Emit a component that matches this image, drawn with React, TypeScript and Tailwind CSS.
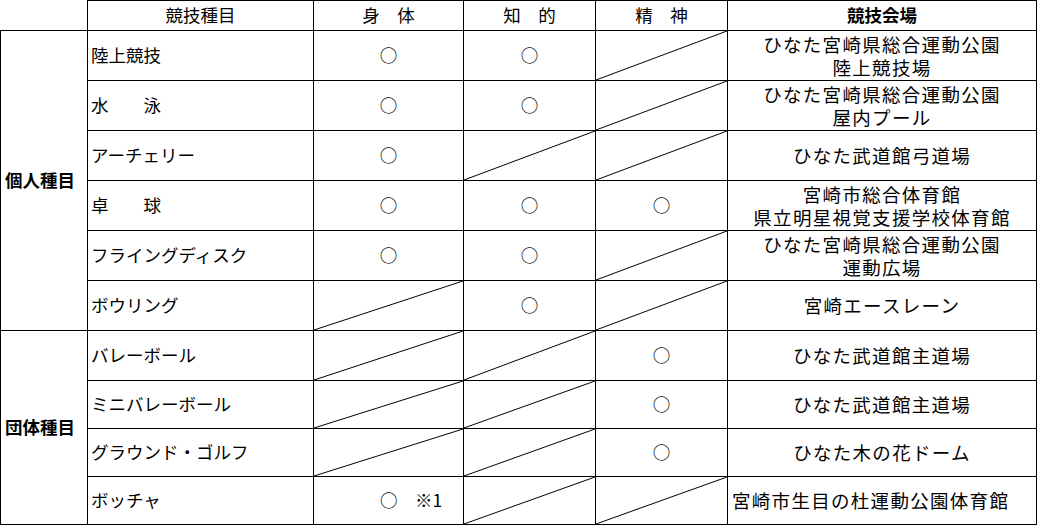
type Mark = 'o' | '/' | '' | 'note';

type Row = {
  name: string;
  body: Mark;
  mind: Mark;
  spirit: Mark;
  venue: string[];
  left?: boolean;
};

const individual: Row[] = [
  { name: '陸上競技', body: 'o', mind: 'o', spirit: '/', venue: ['ひなた宮崎県総合運動公園', '陸上競技場'] },
  { name: '水　　泳', body: 'o', mind: 'o', spirit: '/', venue: ['ひなた宮崎県総合運動公園', '屋内プール'] },
  { name: 'アーチェリー', body: 'o', mind: '/', spirit: '/', venue: ['ひなた武道館弓道場'] },
  { name: '卓　　球', body: 'o', mind: 'o', spirit: 'o', venue: ['宮崎市総合体育館', '県立明星視覚支援学校体育館'] },
  { name: 'フライングディスク', body: 'o', mind: 'o', spirit: '/', venue: ['ひなた宮崎県総合運動公園', '運動広場'] },
  { name: 'ボウリング', body: '/', mind: 'o', spirit: '/', venue: ['宮崎エースレーン'] },
];

const team: Row[] = [
  { name: 'バレーボール', body: '/', mind: '/', spirit: 'o', venue: ['ひなた武道館主道場'] },
  { name: 'ミニバレーボール', body: '/', mind: '/', spirit: 'o', venue: ['ひなた武道館主道場'] },
  { name: 'グラウンド・ゴルフ', body: '/', mind: '/', spirit: 'o', venue: ['ひなた木の花ドーム'] },
  { name: 'ボッチャ', body: 'note', mind: '/', spirit: '/', venue: ['宮崎市生目の杜運動公園体育館'], left: true },
];

const Slash = () => (
  <svg className="absolute inset-0 w-full h-full" viewBox="0 0 100 100" preserveAspectRatio="none">
    <line x1="0" y1="100" x2="100" y2="0" stroke="#000" strokeWidth="1" vectorEffect="non-scaling-stroke" />
  </svg>
);

const MarkCell = ({ mark }: { mark: Mark }) => {
  if (mark === '/') {
    return (
      <td className="relative border border-black p-0">
        <Slash />
      </td>
    );
  }
  if (mark === 'note') {
    return <td className="border border-black p-0 pl-[66px] text-left whitespace-pre">○　※1</td>;
  }
  return <td className="border border-black p-0 text-center">{mark === 'o' ? '○' : ''}</td>;
};

const Line = ({ row, group, span, tall }: { row: Row; group?: string; span?: number; tall?: boolean }) => (
  <tr className={tall ? 'h-[50px]' : 'h-[48px]'}>
    {group && (
      <td rowSpan={span} className="border border-black p-0 pl-[4px] text-left font-bold">
        {group}
      </td>
    )}
    <td className="border border-black p-0 pl-[3px] text-left whitespace-pre">{row.name}</td>
    <MarkCell mark={row.body} />
    <MarkCell mark={row.mind} />
    <MarkCell mark={row.spirit} />
    <td
      className={`border border-black p-0 text-[18.5px] tracking-[1.3px] leading-[23px] ${
        row.left ? 'text-left pl-[4px]' : 'text-center'
      }`}
    >
      {row.venue.map((v) => (
        <div key={v}>{v}</div>
      ))}
    </td>
  </tr>
);

export default function App() {
  return (
    <div className="bg-white w-[1040px] h-[526px] font-['Noto_Sans_CJK_JP',sans-serif] text-[17.5px] text-black">
      <table className="border-collapse table-fixed w-[1036px]">
        <colgroup>
          <col className="w-[87px]" />
          <col className="w-[226px]" />
          <col className="w-[150px]" />
          <col className="w-[132px]" />
          <col className="w-[132px]" />
          <col className="w-[309px]" />
        </colgroup>
        <thead>
          <tr className="h-[30px]">
            <th className="p-0 font-normal"></th>
            <th className="border border-black p-0 font-normal text-center">競技種目</th>
            <th className="border border-black p-0 font-normal text-center whitespace-pre">身　体</th>
            <th className="border border-black p-0 font-normal text-center whitespace-pre">知　的</th>
            <th className="border border-black p-0 font-normal text-center whitespace-pre">精　神</th>
            <th className="border border-black p-0 font-bold text-center">競技会場</th>
          </tr>
        </thead>
        <tbody>
          {individual.map((r, i) => (
            <Line key={r.name} row={r} tall group={i === 0 ? '個人種目' : undefined} span={individual.length} />
          ))}
          {team.map((r, i) => (
            <Line key={r.name} row={r} tall={i === 0} group={i === 0 ? '団体種目' : undefined} span={team.length} />
          ))}
        </tbody>
      </table>
    </div>
  );
}
